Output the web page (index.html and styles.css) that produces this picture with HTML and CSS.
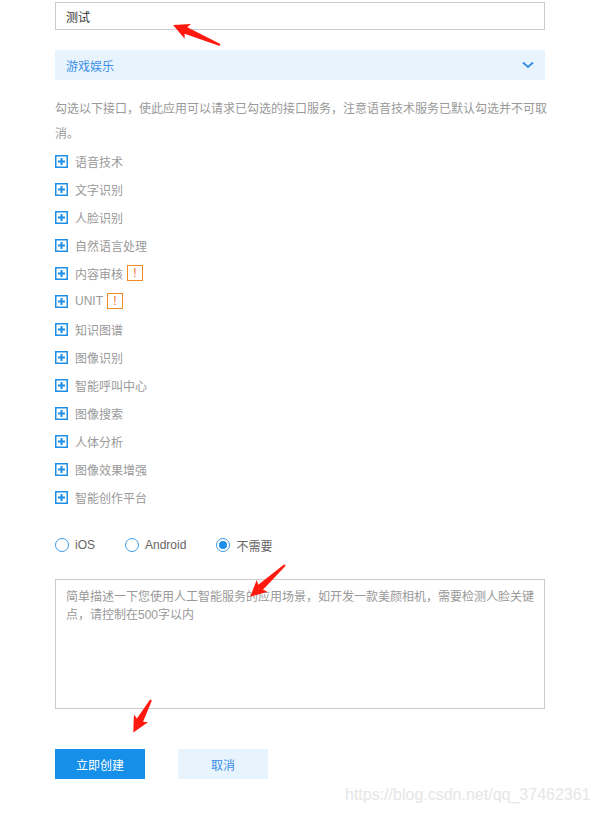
FILE: index.html
```html
<!DOCTYPE html>
<html lang="zh-CN">
<head>
<meta charset="utf-8">
<title>创建应用</title>
<link rel="stylesheet" href="styles.css">
</head>
<body>
<div class="form">
  <div class="input">测试</div>
  <div class="select">
    <span>游戏娱乐</span>
    <svg class="chev" width="12" height="8" viewBox="0 0 12 8"><path d="M1 1.5 L6 6 L11 1.5" fill="none" stroke="#3a8ee6" stroke-width="2"/></svg>
  </div>
  <p class="desc">勾选以下接口，使此应用可以请求已勾选的接口服务，注意语音技术服务已默认勾选并不可取消。</p>
  <ul class="apis">
    <li><svg class="plus" width="13" height="13" viewBox="0 0 13 13"><rect x="0.75" y="0.75" width="11.5" height="11.5" fill="none" stroke="#1d8fe9" stroke-width="1.5"/><path d="M3 6.5 H10 M6.5 3 V10" stroke="#1d8fe9" stroke-width="2"/></svg><span>语音技术</span></li>
    <li><svg class="plus" width="13" height="13" viewBox="0 0 13 13"><rect x="0.75" y="0.75" width="11.5" height="11.5" fill="none" stroke="#1d8fe9" stroke-width="1.5"/><path d="M3 6.5 H10 M6.5 3 V10" stroke="#1d8fe9" stroke-width="2"/></svg><span>文字识别</span></li>
    <li><svg class="plus" width="13" height="13" viewBox="0 0 13 13"><rect x="0.75" y="0.75" width="11.5" height="11.5" fill="none" stroke="#1d8fe9" stroke-width="1.5"/><path d="M3 6.5 H10 M6.5 3 V10" stroke="#1d8fe9" stroke-width="2"/></svg><span>人脸识别</span></li>
    <li><svg class="plus" width="13" height="13" viewBox="0 0 13 13"><rect x="0.75" y="0.75" width="11.5" height="11.5" fill="none" stroke="#1d8fe9" stroke-width="1.5"/><path d="M3 6.5 H10 M6.5 3 V10" stroke="#1d8fe9" stroke-width="2"/></svg><span>自然语言处理</span></li>
    <li><svg class="plus" width="13" height="13" viewBox="0 0 13 13"><rect x="0.75" y="0.75" width="11.5" height="11.5" fill="none" stroke="#1d8fe9" stroke-width="1.5"/><path d="M3 6.5 H10 M6.5 3 V10" stroke="#1d8fe9" stroke-width="2"/></svg><span>内容审核</span><span class="warn">!</span></li>
    <li><svg class="plus" width="13" height="13" viewBox="0 0 13 13"><rect x="0.75" y="0.75" width="11.5" height="11.5" fill="none" stroke="#1d8fe9" stroke-width="1.5"/><path d="M3 6.5 H10 M6.5 3 V10" stroke="#1d8fe9" stroke-width="2"/></svg><span>UNIT</span><span class="warn">!</span></li>
    <li><svg class="plus" width="13" height="13" viewBox="0 0 13 13"><rect x="0.75" y="0.75" width="11.5" height="11.5" fill="none" stroke="#1d8fe9" stroke-width="1.5"/><path d="M3 6.5 H10 M6.5 3 V10" stroke="#1d8fe9" stroke-width="2"/></svg><span>知识图谱</span></li>
    <li><svg class="plus" width="13" height="13" viewBox="0 0 13 13"><rect x="0.75" y="0.75" width="11.5" height="11.5" fill="none" stroke="#1d8fe9" stroke-width="1.5"/><path d="M3 6.5 H10 M6.5 3 V10" stroke="#1d8fe9" stroke-width="2"/></svg><span>图像识别</span></li>
    <li><svg class="plus" width="13" height="13" viewBox="0 0 13 13"><rect x="0.75" y="0.75" width="11.5" height="11.5" fill="none" stroke="#1d8fe9" stroke-width="1.5"/><path d="M3 6.5 H10 M6.5 3 V10" stroke="#1d8fe9" stroke-width="2"/></svg><span>智能呼叫中心</span></li>
    <li><svg class="plus" width="13" height="13" viewBox="0 0 13 13"><rect x="0.75" y="0.75" width="11.5" height="11.5" fill="none" stroke="#1d8fe9" stroke-width="1.5"/><path d="M3 6.5 H10 M6.5 3 V10" stroke="#1d8fe9" stroke-width="2"/></svg><span>图像搜索</span></li>
    <li><svg class="plus" width="13" height="13" viewBox="0 0 13 13"><rect x="0.75" y="0.75" width="11.5" height="11.5" fill="none" stroke="#1d8fe9" stroke-width="1.5"/><path d="M3 6.5 H10 M6.5 3 V10" stroke="#1d8fe9" stroke-width="2"/></svg><span>人体分析</span></li>
    <li><svg class="plus" width="13" height="13" viewBox="0 0 13 13"><rect x="0.75" y="0.75" width="11.5" height="11.5" fill="none" stroke="#1d8fe9" stroke-width="1.5"/><path d="M3 6.5 H10 M6.5 3 V10" stroke="#1d8fe9" stroke-width="2"/></svg><span>图像效果增强</span></li>
    <li><svg class="plus" width="13" height="13" viewBox="0 0 13 13"><rect x="0.75" y="0.75" width="11.5" height="11.5" fill="none" stroke="#1d8fe9" stroke-width="1.5"/><path d="M3 6.5 H10 M6.5 3 V10" stroke="#1d8fe9" stroke-width="2"/></svg><span>智能创作平台</span></li>
  </ul>
  <div class="radios">
    <label class="radio"><span class="circle"></span><span>iOS</span></label>
    <label class="radio"><span class="circle"></span><span>Android</span></label>
    <label class="radio"><span class="circle checked"></span><span>不需要</span></label>
  </div>
  <textarea class="area" placeholder="简单描述一下您使用人工智能服务的应用场景，如开发一款美颜相机，需要检测人脸关键点，请控制在500字以内"></textarea>
  <div class="buttons">
    <button class="btn primary">立即创建</button>
    <button class="btn secondary">取消</button>
  </div>
</div>
<div class="watermark">https://blog.csdn.net/qq_37462361</div>
<svg class="arrows" width="596" height="814" viewBox="0 0 596 814">
  <g fill="#ff1a0f">
    <polygon transform="translate(220 45) rotate(203)" points="0,-1 37,-3.5 35,-8 51,0 35,8 37,3.5 0,1"/>
    <polygon transform="translate(285 565) rotate(137.6)" points="0,-1 33,-3.5 31,-8 47,0 31,8 33,3.5 0,1"/>
    <polygon transform="translate(151 700) rotate(118.6)" points="0,-1 23,-3.5 21,-8 37,0 21,8 23,3.5 0,1"/>
  </g>
</svg>
</body>
</html>
```

FILE: styles.css
```css
html, body {
  margin: 0;
  padding: 0;
  background: #fff;
}
body {
  position: relative;
  width: 596px;
  height: 814px;
  overflow: hidden;
  font-family: "Liberation Sans", "Noto Sans CJK SC", sans-serif;
  font-size: 12px;
  color: #666;
}
.form {
  width: 490px;
  padding: 2px 0 0 55px;
  display: flex;
  flex-direction: column;
}
.input {
  box-sizing: border-box;
  height: 28px;
  border: 1px solid #ccc;
  padding: 0 10px;
  display: flex;
  align-items: center;
  color: #333;
}
.select {
  margin-top: 20px;
  height: 30px;
  background: #e8f4fd;
  display: flex;
  align-items: center;
  justify-content: space-between;
  padding: 0 11px;
  color: #3a8ee6;
}
.chev {
  display: block;
}
.desc {
  width: 500px;
  margin: 17px 0 0 0;
  line-height: 25px;
  color: #999;
}
.apis {
  list-style: none;
  margin: 0;
  padding: 0;
}
.apis li {
  height: 28px;
  display: flex;
  align-items: center;
  color: #999;
}
.plus {
  display: block;
  margin-right: 7px;
}
.warn {
  box-sizing: border-box;
  width: 16px;
  height: 16px;
  margin-left: 4px;
  border: 1px solid #f08a24;
  display: flex;
  align-items: center;
  justify-content: center;
  color: #f06a24;
  font-size: 12px;
  line-height: 1;
}
.radios {
  margin-top: 24px;
  height: 20px;
  display: flex;
  align-items: center;
  gap: 30px;
}
.radio {
  display: flex;
  align-items: center;
  gap: 6px;
  color: #666;
}
.circle {
  box-sizing: border-box;
  width: 14px;
  height: 14px;
  border: 1px solid #3d9be9;
  border-radius: 50%;
  display: flex;
  align-items: center;
  justify-content: center;
}
.circle.checked::after {
  content: "";
  width: 8px;
  height: 8px;
  border-radius: 50%;
  background: #1d8fe9;
}
.area {
  margin-top: 24px;
  box-sizing: border-box;
  width: 490px;
  height: 130px;
  border: 1px solid #ccc;
  padding: 8px 8px 8px 10px;
  font-family: "Liberation Sans", "Noto Sans CJK SC", sans-serif;
  font-size: 12px;
  line-height: 18px;
  resize: none;
  outline: none;
  color: #333;
}
.area::placeholder {
  color: #999;
  opacity: 1;
}
.buttons {
  margin-top: 40px;
  display: flex;
  gap: 33px;
}
.btn {
  width: 90px;
  height: 30px;
  border: none;
  padding: 0;
  font-family: "Liberation Sans", "Noto Sans CJK SC", sans-serif;
  font-size: 12px;
}
.primary {
  background: #168fe9;
  color: #fff;
}
.secondary {
  background: #e8f4fd;
  color: #3a8ee6;
}
.watermark {
  position: absolute;
  left: 345px;
  top: 786px;
  font-family: "Liberation Sans", sans-serif;
  font-size: 16px;
  color: #e6e6e6;
  white-space: nowrap;
}
.arrows {
  position: absolute;
  left: 0;
  top: 0;
  pointer-events: none;
}
```
